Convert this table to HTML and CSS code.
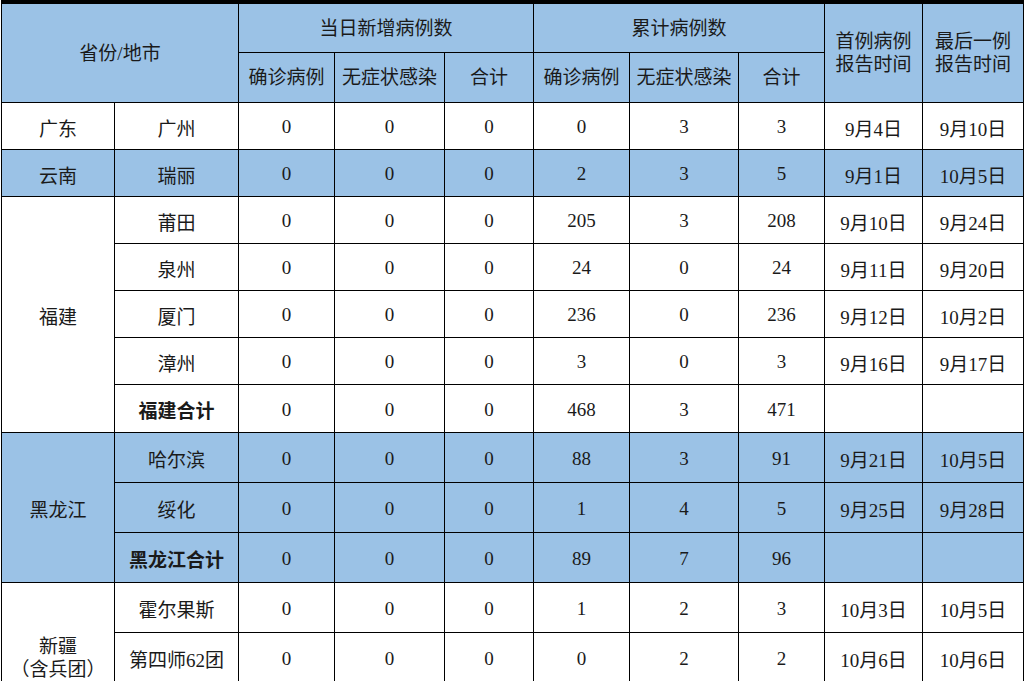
FILE: index.html
```html
<!DOCTYPE html>
<html lang="zh-CN">
<head>
<meta charset="utf-8">
<title>病例统计</title>
<link rel="stylesheet" href="styles.css">
</head>
<body>
<div class="table">
  <div class="c h span-c2 span-r2">省份/地市</div>
  <div class="c h span-c3">当日新增病例数</div>
  <div class="c h span-c3">累计病例数</div>
  <div class="c h span-r2 two">首例病例<br>报告时间</div>
  <div class="c h span-r2 two">最后一例<br>报告时间</div>
  <div class="c h">确诊病例</div>
  <div class="c h">无症状感染</div>
  <div class="c h">合计</div>
  <div class="c h">确诊病例</div>
  <div class="c h">无症状感染</div>
  <div class="c h">合计</div>

  <div class="c">广东</div><div class="c">广州</div>
  <div class="c">0</div><div class="c">0</div><div class="c">0</div><div class="c">0</div><div class="c">3</div><div class="c">3</div>
  <div class="c">9月4日</div><div class="c">9月10日</div>

  <div class="c b">云南</div><div class="c b">瑞丽</div>
  <div class="c b">0</div><div class="c b">0</div><div class="c b">0</div><div class="c b">2</div><div class="c b">3</div><div class="c b">5</div>
  <div class="c b">9月1日</div><div class="c b">10月5日</div>

  <div class="c span-r5">福建</div><div class="c">莆田</div>
  <div class="c">0</div><div class="c">0</div><div class="c">0</div><div class="c">205</div><div class="c">3</div><div class="c">208</div>
  <div class="c">9月10日</div><div class="c">9月24日</div>
  <div class="c">泉州</div>
  <div class="c">0</div><div class="c">0</div><div class="c">0</div><div class="c">24</div><div class="c">0</div><div class="c">24</div>
  <div class="c">9月11日</div><div class="c">9月20日</div>
  <div class="c">厦门</div>
  <div class="c">0</div><div class="c">0</div><div class="c">0</div><div class="c">236</div><div class="c">0</div><div class="c">236</div>
  <div class="c">9月12日</div><div class="c">10月2日</div>
  <div class="c">漳州</div>
  <div class="c">0</div><div class="c">0</div><div class="c">0</div><div class="c">3</div><div class="c">0</div><div class="c">3</div>
  <div class="c">9月16日</div><div class="c">9月17日</div>
  <div class="c bold">福建合计</div>
  <div class="c">0</div><div class="c">0</div><div class="c">0</div><div class="c">468</div><div class="c">3</div><div class="c">471</div>
  <div class="c"></div><div class="c"></div>

  <div class="c b span-r3">黑龙江</div><div class="c b">哈尔滨</div>
  <div class="c b">0</div><div class="c b">0</div><div class="c b">0</div><div class="c b">88</div><div class="c b">3</div><div class="c b">91</div>
  <div class="c b">9月21日</div><div class="c b">10月5日</div>
  <div class="c b">绥化</div>
  <div class="c b">0</div><div class="c b">0</div><div class="c b">0</div><div class="c b">1</div><div class="c b">4</div><div class="c b">5</div>
  <div class="c b">9月25日</div><div class="c b">9月28日</div>
  <div class="c b bold">黑龙江合计</div>
  <div class="c b">0</div><div class="c b">0</div><div class="c b">0</div><div class="c b">89</div><div class="c b">7</div><div class="c b">96</div>
  <div class="c b"></div><div class="c b"></div>

  <div class="c span-r2 two low">新疆<br>（含兵团）</div><div class="c">霍尔果斯</div>
  <div class="c">0</div><div class="c">0</div><div class="c">0</div><div class="c">1</div><div class="c">2</div><div class="c">3</div>
  <div class="c">10月3日</div><div class="c">10月5日</div>
  <div class="c">第四师62团</div>
  <div class="c">0</div><div class="c">0</div><div class="c">0</div><div class="c">0</div><div class="c">2</div><div class="c">2</div>
  <div class="c">10月6日</div><div class="c">10月6日</div>
</div>
</body>
</html>
```
FILE: styles.css
```css
html, body {
  margin: 0;
  padding: 0;
  overflow: hidden;
  background: #ffffff;
}

.table {
  display: grid;
  grid-template-columns: 113px 124px 96px 110px 89px 96px 109px 86px 98px 101px;
  grid-template-rows: 49px 50px 47px 47px 47px 47px 47px 47px 48px 50px 50px 50px 50px 50px;
  width: max-content;
  margin-left: 1px;
  border-top: 4px solid #000;
  border-left: 1px solid #000;
  font-family: "Liberation Serif", "Noto Sans CJK SC", serif;
  font-size: 19px;
  color: #1a1a1a;
}

.c {
  box-sizing: border-box;
  border-right: 1px solid #000;
  border-bottom: 1px solid #000;
  display: flex;
  align-items: center;
  justify-content: center;
  text-align: center;
  background: #ffffff;
  padding-top: 2px;
  white-space: nowrap;
}

.h, .b {
  background: #9bc2e6;
}

.h {
  padding-top: 0;
  padding-bottom: 4px;
}

.h.span-r2.two {
  align-items: flex-start;
  padding-top: 26px;
  padding-bottom: 0;
}

.two {
  line-height: 23px;
}

.low {
  align-items: flex-end;
  padding-top: 0;
  padding-bottom: 1px;
}

.bold {
  font-weight: bold;
}

.span-c2 { grid-column: span 2; }
.span-c3 { grid-column: span 3; }
.span-r2 { grid-row: span 2; }
.span-r3 { grid-row: span 3; }
.span-r5 { grid-row: span 5; }
```
